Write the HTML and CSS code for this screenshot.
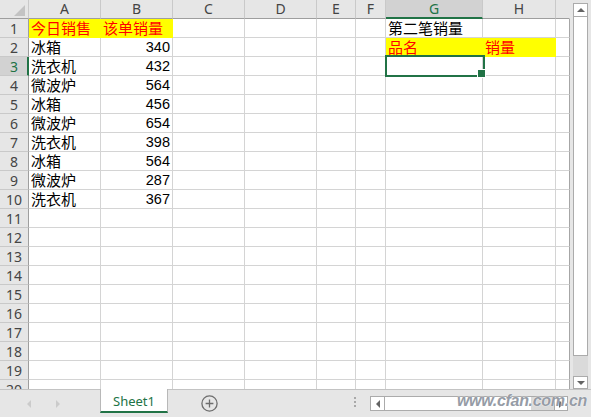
FILE: index.html
```html
<!DOCTYPE html>
<html lang="zh-CN">
<head>
<meta charset="utf-8">
<title>Sheet1</title>
<link rel="stylesheet" href="styles.css">
</head>
<body>
<div class="app">
  <div class="main">
    <div class="sheet">
      <div class="row hdr"><div class="corner"></div><div>A</div><div>B</div><div>C</div><div>D</div><div>E</div><div>F</div><div class="sel">G</div><div>H</div><div class="edge"></div></div>
      <div class="row"><div class="rh">1</div><div class="c hl">今日销售</div><div class="c hl">该单销量</div><div></div><div></div><div></div><div></div><div class="c">第二笔销量</div><div></div><div class="edge"></div></div>
      <div class="row"><div class="rh">2</div><div class="c">冰箱</div><div class="c num">340</div><div></div><div></div><div></div><div></div><div class="c hl">品名</div><div class="c hl">销量</div><div class="edge"></div></div>
      <div class="row"><div class="rh sel">3</div><div class="c">洗衣机</div><div class="c num">432</div><div></div><div></div><div></div><div></div><div class="cur"></div><div></div><div class="edge"></div></div>
      <div class="row"><div class="rh">4</div><div class="c">微波炉</div><div class="c num">564</div><div></div><div></div><div></div><div></div><div></div><div></div><div class="edge"></div></div>
      <div class="row"><div class="rh">5</div><div class="c">冰箱</div><div class="c num">456</div><div></div><div></div><div></div><div></div><div></div><div></div><div class="edge"></div></div>
      <div class="row"><div class="rh">6</div><div class="c">微波炉</div><div class="c num">654</div><div></div><div></div><div></div><div></div><div></div><div></div><div class="edge"></div></div>
      <div class="row"><div class="rh">7</div><div class="c">洗衣机</div><div class="c num">398</div><div></div><div></div><div></div><div></div><div></div><div></div><div class="edge"></div></div>
      <div class="row"><div class="rh">8</div><div class="c">冰箱</div><div class="c num">564</div><div></div><div></div><div></div><div></div><div></div><div></div><div class="edge"></div></div>
      <div class="row"><div class="rh">9</div><div class="c">微波炉</div><div class="c num">287</div><div></div><div></div><div></div><div></div><div></div><div></div><div class="edge"></div></div>
      <div class="row"><div class="rh">10</div><div class="c">洗衣机</div><div class="c num">367</div><div></div><div></div><div></div><div></div><div></div><div></div><div class="edge"></div></div>
      <div class="row"><div class="rh">11</div><div></div><div></div><div></div><div></div><div></div><div></div><div></div><div></div><div class="edge"></div></div>
      <div class="row"><div class="rh">12</div><div></div><div></div><div></div><div></div><div></div><div></div><div></div><div></div><div class="edge"></div></div>
      <div class="row"><div class="rh">13</div><div></div><div></div><div></div><div></div><div></div><div></div><div></div><div></div><div class="edge"></div></div>
      <div class="row"><div class="rh">14</div><div></div><div></div><div></div><div></div><div></div><div></div><div></div><div></div><div class="edge"></div></div>
      <div class="row"><div class="rh">15</div><div></div><div></div><div></div><div></div><div></div><div></div><div></div><div></div><div class="edge"></div></div>
      <div class="row"><div class="rh">16</div><div></div><div></div><div></div><div></div><div></div><div></div><div></div><div></div><div class="edge"></div></div>
      <div class="row"><div class="rh">17</div><div></div><div></div><div></div><div></div><div></div><div></div><div></div><div></div><div class="edge"></div></div>
      <div class="row"><div class="rh">18</div><div></div><div></div><div></div><div></div><div></div><div></div><div></div><div></div><div class="edge"></div></div>
      <div class="row"><div class="rh">19</div><div></div><div></div><div></div><div></div><div></div><div></div><div></div><div></div><div class="edge"></div></div>
      <div class="row"><div class="rh">20</div><div></div><div></div><div></div><div></div><div></div><div></div><div></div><div></div><div class="edge"></div></div>
    </div>
    <div class="vscroll">
      <div class="sbtn up"><span class="tri-up"></span></div>
      <div class="vthumb"></div>
      <div class="vtrack"></div>
      <div class="sbtn down"><span class="tri-down"></span></div>
    </div>
  </div>
  <div class="bottom">
    <div class="nav"><span class="nav-l"></span><span class="nav-r"></span></div>
    <div class="tab">Sheet1</div>
    <div class="add">
      <svg width="17" height="17" viewBox="0 0 17 17"><circle cx="8.5" cy="8.5" r="7.6" fill="none" stroke="#6d6d6d" stroke-width="1.3"/><path d="M8.5 4.6v7.8M4.6 8.5h7.8" stroke="#6d6d6d" stroke-width="1.3"/></svg>
    </div>
    <div class="dots"><span></span><span></span><span></span></div>
    <div class="hscroll">
      <div class="hbtn left"><span class="tri-left"></span></div>
      <div class="hthumb"></div>
      <div class="htrack"></div>
      <div class="hbtn right"><span class="tri-right"></span></div>
    </div>
    <div class="watermark">www.cfan.com.cn</div>
  </div>
</div>
</body>
</html>
```

FILE: styles.css
```css
* { box-sizing: border-box; }

body {
  margin: 0;
  background: #e6e6e6;
  font-family: "Noto Sans CJK SC", "Noto Sans", sans-serif;
}

.app {
  width: 591px;
  height: 417px;
  display: flex;
  flex-direction: column;
  overflow: hidden;
}

.main {
  height: 389px;
  display: flex;
  overflow: hidden;
  flex: none;
}

.sheet {
  width: 570px;
  flex: none;
  background: #fff;
  overflow: hidden;
}

.row {
  display: grid;
  grid-template-columns: 29px 72px 72px 72px 72px 39px 30px 97px 73px 14px;
  height: 19px;
}

.row > div {
  height: 19px;
  border-right: 1px solid #d4d4d4;
  border-bottom: 1px solid #d4d4d4;
  white-space: nowrap;
}

.row > .edge { border-right-color: #a6a6a6; }

.c {
  font-size: 15px;
  line-height: 18px;
  padding: 0 2px;
  color: #000;
  font-family: "Noto Sans CJK SC", sans-serif;
}

.row > .num {
  font-family: "Liberation Sans", Arial, sans-serif;
  font-size: 14.5px;
  line-height: 19px;
  text-align: right;
}

.row > .hl {
  background: #ffff00;
  color: #ff0000;
  border-right-color: #ffff00;
  border-bottom-color: #ffff00;
}

/* headers */
.hdr > div {
  background: #e6e6e6;
  border-right-color: #c9c9c9;
  border-bottom-color: #9e9e9e;
  text-align: center;
  font-family: "Noto Sans", sans-serif;
  font-size: 14px;
  line-height: 18px;
  color: #444;
}

.hdr > .edge { border-right-color: #e6e6e6; }

.hdr > .sel {
  background: #d2d2d2;
  color: #217346;
  border-bottom: 2px solid #217346;
}

.hdr > .corner { position: relative; }

.corner::after {
  content: "";
  position: absolute;
  right: 3px;
  bottom: 2px;
  width: 0;
  height: 0;
  border-left: 11px solid transparent;
  border-bottom: 11px solid #c3c3c3;
}

.row > .rh {
  background: #e6e6e6;
  border-right-color: #9e9e9e;
  border-bottom-color: #c9c9c9;
  text-align: center;
  font-family: "Noto Sans", sans-serif;
  font-size: 14px;
  line-height: 19px;
  color: #444;
}

.row > .rh.sel {
  background: #d2d2d2;
  color: #217346;
  border-right: 2px solid #217346;
  padding-left: 1px;
}

/* active cell */
.cur { position: relative; }

.cur::before {
  content: "";
  position: absolute;
  top: -2px;
  left: -1px;
  right: -3px;
  bottom: -2px;
  border: 2px solid #217346;
}

.cur::after {
  content: "";
  position: absolute;
  right: -4px;
  bottom: -3px;
  width: 7px;
  height: 7px;
  background: #217346;
  border: 1px solid #fff;
}

/* vertical scrollbar */
.vscroll {
  width: 21px;
  flex: none;
  padding: 3px 3px 0;
  display: flex;
  flex-direction: column;
}

.sbtn {
  background: #fff;
  border: 1px solid #ababab;
  display: flex;
  align-items: center;
  justify-content: center;
  flex: none;
}

.sbtn.up { height: 14px; }
.sbtn.down { height: 13px; }

.vthumb {
  height: 339px;
  flex: none;
  background: #fff;
  border: 1px solid #ababab;
  border-top: none;
}

.vtrack {
  flex: 1;
  background: #dadada;
}

.tri-up {
  width: 0; height: 0;
  border-left: 4px solid transparent;
  border-right: 4px solid transparent;
  border-bottom: 4px solid #646464;
}

.tri-down {
  width: 0; height: 0;
  border-left: 4px solid transparent;
  border-right: 4px solid transparent;
  border-top: 4px solid #646464;
}

.tri-left {
  width: 0; height: 0;
  border-top: 4px solid transparent;
  border-bottom: 4px solid transparent;
  border-right: 4px solid #646464;
}

.tri-right {
  width: 0; height: 0;
  border-top: 4px solid transparent;
  border-bottom: 4px solid transparent;
  border-left: 4px solid #646464;
}

/* bottom bar */
.bottom {
  height: 28px;
  flex: none;
  border-top: 1px solid #c3c3c3;
  display: flex;
  align-items: flex-start;
  position: relative;
}

.nav {
  width: 100px;
  height: 27px;
  flex: none;
  display: flex;
  align-items: center;
  padding-left: 27px;
  gap: 25px;
}

.nav-l {
  width: 0; height: 0;
  border-top: 4px solid transparent;
  border-bottom: 4px solid transparent;
  border-right: 4px solid #cbcbcb;
}

.nav-r {
  width: 0; height: 0;
  border-top: 4px solid transparent;
  border-bottom: 4px solid transparent;
  border-left: 4px solid #cbcbcb;
}

.tab {
  width: 68px;
  height: 24px;
  flex: none;
  margin-top: -1px;
  background: #fff;
  border-left: 1px solid #b8b8b8;
  border-right: 1px solid #b8b8b8;
  border-bottom: 2px solid #217346;
  color: #217346;
  font-family: "Noto Sans", sans-serif;
  font-size: 13px;
  line-height: 20px;
  padding-top: 2px;
  text-align: center;
}

.add {
  width: 17px;
  height: 17px;
  flex: none;
  margin-left: 33px;
  margin-top: 5px;
}

.add svg { display: block; }

.dots {
  flex: none;
  margin-left: 136px;
  margin-top: 7px;
  display: flex;
  flex-direction: column;
  gap: 2px;
}

.dots span {
  width: 2px;
  height: 2px;
  background: #a8a8a8;
}

.hscroll {
  flex: none;
  width: 198px;
  height: 15px;
  margin-left: 14px;
  margin-top: 6px;
  display: flex;
}

.hbtn {
  height: 15px;
  background: #fff;
  border: 1px solid #ababab;
  display: flex;
  align-items: center;
  justify-content: center;
  flex: none;
}

.hbtn.left { width: 15px; }
.hbtn.right { width: 14px; }

.hthumb {
  width: 146px;
  flex: none;
  background: #fff;
  border-top: 1px solid #ababab;
  border-bottom: 1px solid #ababab;
}

.htrack {
  width: 23px;
  flex: none;
  background: #dadada;
  border-top: 1px solid #ababab;
  border-bottom: 1px solid #ababab;
}

.watermark {
  position: absolute;
  right: 4px;
  top: 2px;
  font-family: "Liberation Sans", Arial, sans-serif;
  font-style: italic;
  font-weight: bold;
  font-size: 16px;
  letter-spacing: -0.3px;
  color: #969ca6;
  text-shadow: 0 0 1px #fff, 0 0 1px #fff;
}
```
